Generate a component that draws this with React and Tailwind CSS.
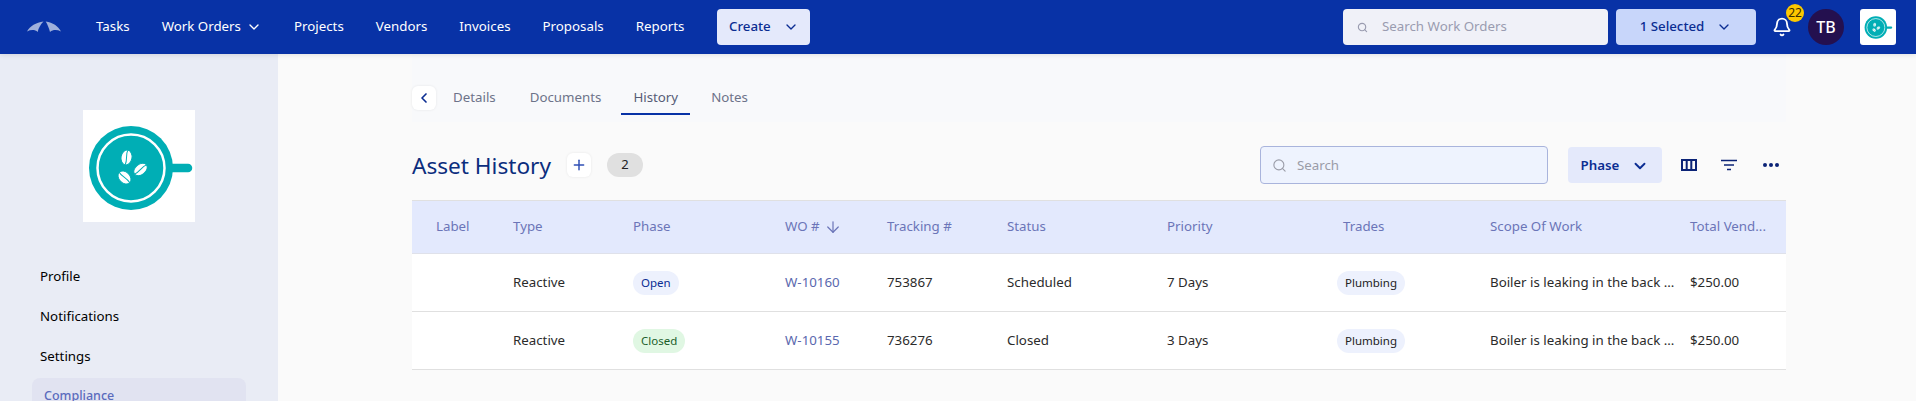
import { Bell, ChevronDown, ChevronLeft, Plus, Search, ArrowDown } from 'lucide-react';

const NAV = ['Projects', 'Vendors', 'Invoices', 'Proposals', 'Reports'];

const GRID = 'grid grid-cols-[77px_120px_152px_102px_120px_160px_176px_147px_212px_108px] items-center';

const ROWS = [
  { phase: 'Open', wo: 'W-10160', tracking: '753867', status: 'Scheduled', priority: '7 Days' },
  { phase: 'Closed', wo: 'W-10155', tracking: '736276', status: 'Closed', priority: '3 Days' },
];

function CupLogo({ className }) {
  return (
    <svg viewBox="0 0 112 112" className={className}>
      <rect width="112" height="112" fill="#fff" />
      <circle cx="48" cy="58" r="42" fill="#00aeb5" />
      <circle cx="48" cy="58" r="33.5" fill="none" stroke="#fff" strokeWidth="2.5" />
      <path d="M88 58h17" stroke="#00aeb5" strokeWidth="8.5" strokeLinecap="round" />
      <g fill="#fff" stroke="#00aeb5" strokeWidth="1">
        <g transform="rotate(10 43.5 47.5)">
          <ellipse cx="43.5" cy="47.5" rx="5.5" ry="7.5" />
          <path d="M43.5 40c-1.5 5 1.5 9 0 15" fill="none" />
        </g>
        <g transform="rotate(52 57.5 59.5)">
          <ellipse cx="57.5" cy="59.5" rx="5.2" ry="7.6" />
          <path d="M57.5 52c-1.5 5 1.5 9 0 15" fill="none" />
        </g>
        <g transform="rotate(-45 41.5 67.5)">
          <ellipse cx="41.5" cy="67.5" rx="5.5" ry="7.4" />
          <path d="M41.5 60c-1.5 5 1.5 9 0 15" fill="none" />
        </g>
      </g>
    </svg>
  );
}

function WingLogo() {
  return (
    <svg viewBox="0 0 34 12" className="w-[34px] h-3 shrink-0" fill="#9fb0dc">
      <path d="M0 10.5C3 5 9 1.5 16.5.5 13.5 3.500 11.500 7 10.700 11 8 8.500 4 8.500 0 10.500Z" />
      <path d="M34 10.500C31 5 26 1.500 18.700.5 20.500 3.500 22 7 23 11 26 8.500 30 8.500 34 10.500Z" />
    </svg>
  );
}

function Pill({ children, className }) {
  return <span className={`inline-flex h-6 items-center rounded-full px-2 text-[11.5px] ${className}`}>{children}</span>;
}

export default function App() {
  return (
    <div className="h-[401px] w-full overflow-hidden bg-[#fafafa] font-['Noto_Sans',sans-serif] text-[13.3px]">
      <header className="relative z-10 flex h-[54px] items-center bg-[#0832a6] pl-[27px] pr-5 text-white shadow-[0_1px_5px_rgba(0,0,0,0.1)]">
        <WingLogo />
        <nav className="ml-[35px] flex items-center gap-8">
          <a>Tasks</a>
          <a className="flex items-center">
            Work Orders
            <ChevronDown className="ml-[5px] size-4" strokeWidth={2} />
          </a>
          {NAV.map((item) => (
            <a key={item}>{item}</a>
          ))}
        </nav>
        <button className="ml-[33px] flex h-9 w-[93px] items-center justify-center gap-3 rounded bg-[#e4e9fb] font-medium text-[#0b2d92]">
          Create
          <ChevronDown className="size-4" />
        </button>

        <div className="ml-auto flex h-9 w-[265px] items-center rounded bg-[#f0f1f8] pl-[14px] text-[#9a9cb0]">
          <Search className="size-[11px]" strokeWidth={2.5} />
          <span className="ml-[14px]">Search Work Orders</span>
        </div>
        <button className="ml-2 flex h-9 w-[140px] items-center justify-center gap-3 rounded bg-[#c8d6fa] font-medium text-[#0b2d92]">
          1 Selected
          <ChevronDown className="size-4" />
        </button>
        <div className="relative ml-[17px] flex size-[18px] items-center justify-center">
          <Bell className="size-5 shrink-0" strokeWidth={2.2} />
          <span className="absolute -right-[13px] -top-[14px] flex size-[18px] items-center justify-center rounded-full bg-[#fdc800] text-xs text-[#3a2c00]">22</span>
        </div>
        <div className="ml-[17px] flex size-9 items-center justify-center rounded-full bg-[#24104f] text-base font-medium">TB</div>
        <div className="ml-4 size-9 overflow-hidden rounded-[3px] bg-white p-[3px]">
          <CupLogo className="size-[30px]" />
        </div>
      </header>

      <div className="flex">
        <aside className="h-[347px] w-[278px] shrink-0 bg-[#e9ecf5] px-8 pt-14 text-black">
          <CupLogo className="ml-[51px] size-28" />
          <ul className="mt-[35px]">
            <li className="flex h-10 items-center pl-2">Profile</li>
            <li className="flex h-10 items-center pl-2">Notifications</li>
            <li className="flex h-10 items-center pl-2">Settings</li>
          </ul>
          <div className="mt-px h-10 rounded-lg bg-[#e1e3f1] px-3 pt-[9px] text-[12.5px] font-medium text-[#5b6bbd]">Compliance</div>
        </aside>

        <main className="min-w-0 flex-1 pl-[134px] pr-[130px]">
          <div className="flex h-[68px] items-center bg-[#f8f9fb] pt-5">
            <button className="flex size-6 items-center justify-center rounded-md bg-white text-[#0b2d92] shadow-[0_0_3px_rgba(0,0,0,0.08)]">
              <ChevronLeft className="size-4" strokeWidth={2.5} />
            </button>
            <div className="ml-[17px] flex items-center text-[#6d7389]">
              <span>Details</span>
              <span className="ml-[34px]">Documents</span>
              <span className="relative ml-8 text-[#565c76]">
                History
                <span className="absolute -inset-x-3 top-[25px] h-[2px] bg-[#0832a6]"></span>
              </span>
              <span className="ml-[33px]">Notes</span>
            </div>
          </div>

          <div className="flex h-[78px] items-center pb-4 pt-6">
            <h1 className="h-[38px] text-[22.6px] leading-[40px] text-[#0b2d7d]">Asset History</h1>
            <button className="ml-4 flex size-6 items-center justify-center rounded-md bg-white text-[#2f4fb5] shadow-[0_0_3px_rgba(0,0,0,0.08)]">
              <Plus className="size-4" strokeWidth={2.2} />
            </button>
            <span className="ml-4 flex h-6 w-9 items-center justify-center rounded-full bg-[#e0e0e0] text-[13px] text-[#222]">2</span>

            <div className="ml-auto flex h-[38px] w-[288px] items-center rounded border border-[#a9b4dc] bg-[#eef3fe] pl-[11px] text-[#9a9ca8]">
              <Search className="size-[15px]" strokeWidth={1.8} />
              <span className="ml-2.5 pt-0.5">Search</span>
            </div>
            <button className="ml-5 flex h-9 w-[94px] items-center justify-center gap-3 rounded bg-[#e4e9fb] pt-px font-semibold text-[#0b2d92]">
              Phase
              <ChevronDown className="size-[18px]" strokeWidth={2.5} />
            </button>
            <div className="ml-[19px] flex w-[105px] items-center text-[#0b2376]">
              <svg viewBox="0 0 16 14" className="h-3.5 w-4" fill="none" stroke="currentColor" strokeWidth="2">
                <rect x="1" y="2" width="14" height="10" />
                <path d="M5.700 2v10M10.300 2v10" />
              </svg>
              <svg viewBox="0 0 16 12" className="ml-6 h-3 w-4" fill="none" stroke="currentColor" strokeWidth="1.600">
                <path d="M0 1.500h16M3 6h10M6 10.500h4" />
              </svg>
              <svg viewBox="0 0 16 4" className="ml-[26px] h-1 w-4" fill="currentColor">
                <circle cx="2" cy="2" r="2" />
                <circle cx="8" cy="2" r="2" />
                <circle cx="14" cy="2" r="2" />
              </svg>
            </div>
          </div>

          <div className="border-t border-[#e0e0e0]">
            <div className={`${GRID} h-[53px] border-b border-[#dfe1ea] bg-[#e3e9fd] text-[#6b75b8]`}>
              <span className="pl-6">Label</span>
              <span className="pl-6">Type</span>
              <span className="pl-6">Phase</span>
              <span className="flex items-center pl-6">
                WO #
                <ArrowDown className="ml-1 size-[18px]" strokeWidth={1.6} />
              </span>
              <span className="pl-6">Tracking #</span>
              <span className="pl-6">Status</span>
              <span className="pl-6">Priority</span>
              <span className="pl-6">Trades</span>
              <span className="pl-6">Scope Of Work</span>
              <span className="pl-3">Total Vend...</span>
            </div>
            {ROWS.map((row) => (
              <div key={row.wo} className={`${GRID} h-[58px] border-b border-[#e0e0e0] bg-white text-[#2b2b2b]`}>
                <span></span>
                <span className="pl-6">Reactive</span>
                <span className="pl-6">
                  {row.phase === 'Open'
                    ? <Pill className="bg-[#edf1fd] text-[#0b2d92]">Open</Pill>
                    : <Pill className="bg-[#e0f7e3] text-[#1b5e2a]">Closed</Pill>}
                </span>
                <span className="pl-6 text-[#5a68ae]">{row.wo}</span>
                <span className="pl-6">{row.tracking}</span>
                <span className="pl-6">{row.status}</span>
                <span className="pl-6">{row.priority}</span>
                <span className="pl-[18px]"><Pill className="bg-[#edf1fd] text-[#222]">Plumbing</Pill></span>
                <span className="whitespace-nowrap pl-6">Boiler is leaking in the back ...</span>
                <span className="pl-3">$250.00</span>
              </div>
            ))}
          </div>
        </main>
      </div>
    </div>
  );
}
